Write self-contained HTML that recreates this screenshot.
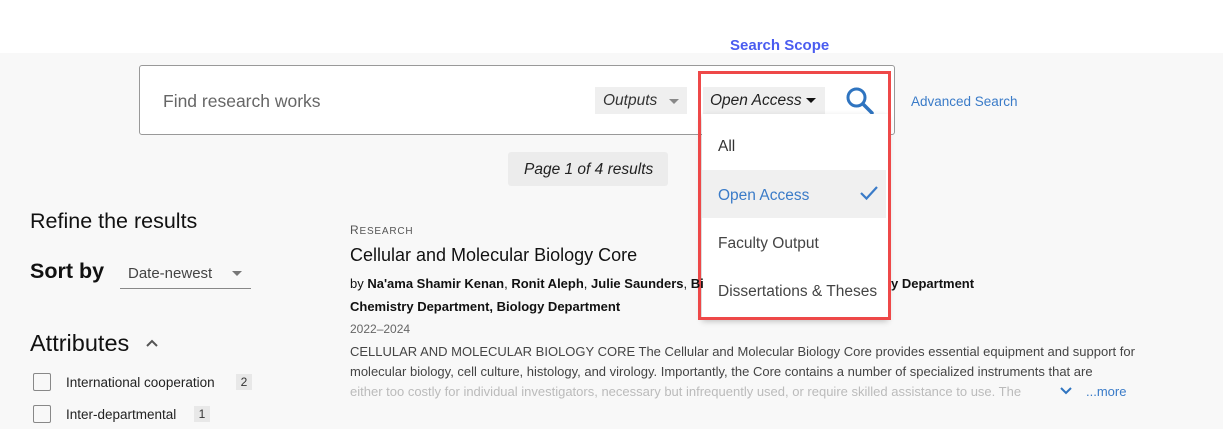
<!DOCTYPE html>
<html><head><style>
*{margin:0;padding:0;box-sizing:border-box}
body{width:1223px;height:429px;overflow:hidden;background:#f8f8f8;font-family:"Liberation Sans",sans-serif;position:relative;color:#111}
.a{position:absolute;white-space:nowrap}
</style></head><body>
<div class="a" style="left:0;top:0;width:1223px;height:53px;background:#fff"></div>
<div class="a" style="left:730px;top:37px;font-size:15px;font-weight:bold;color:#4a5cf0">Search Scope</div>
<div class="a" style="left:139px;top:65px;width:756px;height:70px;background:#fff;border:1px solid #999;border-radius:3px"></div>
<div class="a" style="left:163px;top:91px;font-size:17.5px;color:#666">Find research works</div>
<div class="a" style="left:595px;top:87px;width:92px;height:27px;background:#efefef"></div>
<div class="a" style="left:603px;top:92px;font-size:15.5px;font-style:italic;color:#333">Outputs</div>
<div class="a" style="left:669px;top:99px;border-left:5px solid transparent;border-right:5px solid transparent;border-top:5px solid #888"></div>
<div class="a" style="left:703px;top:87px;width:122px;height:27px;background:#efefef"></div>
<div class="a" style="left:710px;top:92px;font-size:15.5px;font-style:italic;color:#222">Open Access</div>
<div class="a" style="left:806px;top:98px;border-left:5px solid transparent;border-right:5px solid transparent;border-top:5px solid #111"></div>
<svg class="a" style="left:844px;top:85px" width="32" height="32" viewBox="0 0 32 32"><circle cx="12.5" cy="12.5" r="8.5" fill="none" stroke="#2f74c0" stroke-width="3"/><path d="M19 19 L28 28" stroke="#2f74c0" stroke-width="3.5" stroke-linecap="round"/></svg>
<div class="a" style="left:911px;top:94px;font-size:13.5px;color:#3a7bc8">Advanced Search</div>
<div class="a" style="left:702px;top:114px;width:186px;height:204px;background:#fff;box-shadow:0 3px 6px rgba(0,0,0,.25)"></div>
<div class="a" style="left:702px;top:170px;width:184px;height:48px;background:#f0f0f0"></div>
<div class="a" style="left:718px;top:138px;font-size:15.5px;color:#333">All</div>
<div class="a" style="left:718px;top:187px;font-size:15.5px;color:#3a7bc8">Open Access</div>
<svg class="a" style="left:859px;top:185px" width="20" height="16" viewBox="0 0 20 16"><path d="M2 8 L7.5 13.5 L18 2" fill="none" stroke="#3a7bc8" stroke-width="2.2"/></svg>
<div class="a" style="left:718px;top:235px;font-size:15.5px;color:#444">Faculty Output</div>
<div class="a" style="left:718px;top:283px;font-size:15.5px;color:#444">Dissertations &amp; Theses</div>
<div class="a" style="left:698px;top:71px;width:193px;height:249px;border:3px solid #ee4848"></div>
<div class="a" style="left:508px;top:152px;width:160px;height:34px;background:#ececec;border-radius:3px"></div>
<div class="a" style="left:524px;top:161px;font-size:15.5px;font-style:italic;color:#222">Page 1 of 4 results</div>
<div class="a" style="left:30px;top:209px;font-size:21.5px;color:#111">Refine the results</div>
<div class="a" style="left:30px;top:259px;font-size:21.5px;font-weight:bold;color:#111">Sort by</div>
<div class="a" style="left:128px;top:265px;font-size:15px;color:#444">Date-newest</div>
<div class="a" style="left:232px;top:271px;border-left:5px solid transparent;border-right:5px solid transparent;border-top:5px solid #777"></div>
<div class="a" style="left:120px;top:288px;width:131px;height:1px;background:#888"></div>
<div class="a" style="left:30px;top:330px;font-size:23.5px;color:#111">Attributes</div>
<svg class="a" style="left:145px;top:338px" width="14" height="10"><path d="M2 8 L7 3 L12 8" fill="none" stroke="#555" stroke-width="2"/></svg>
<div class="a" style="left:33px;top:373px;width:18px;height:18px;border:1.5px solid #888;border-radius:2px"></div>
<div class="a" style="left:66px;top:375px;font-size:13.5px;color:#222">International cooperation</div>
<div class="a" style="left:236px;top:374px;width:16px;height:16px;background:#e8e8e8;font-size:12px;text-align:center;line-height:16px;color:#333">2</div>
<div class="a" style="left:33px;top:405px;width:18px;height:18px;border:1.5px solid #888;border-radius:2px"></div>
<div class="a" style="left:66px;top:407px;font-size:13.5px;color:#222">Inter-departmental</div>
<div class="a" style="left:194px;top:406px;width:16px;height:16px;background:#e8e8e8;font-size:12px;text-align:center;line-height:16px;color:#333">1</div>
<div class="a" style="left:350px;top:223px;font-size:12px;letter-spacing:.8px;color:#555">R<span style="font-size:10px">ESEARCH</span></div>
<div class="a" style="left:350px;top:245px;font-size:18px;color:#111">Cellular and Molecular Biology Core</div>
<div class="a" style="left:350px;top:276px;font-size:13px;color:#111">by <b style="font-weight:600">Na'ama Shamir Kenan</b>, <b style="font-weight:600">Ronit Aleph</b>, <b style="font-weight:600">Julie Saunders</b>, <b style="font-weight:600">Bi</b></div>
<div class="a" style="left:891px;top:276px;font-size:13px;font-weight:600;color:#111">y Department</div>
<div class="a" style="left:350px;top:299px;font-size:13px;font-weight:600;color:#111">Chemistry Department, Biology Department</div>
<div class="a" style="left:350px;top:322px;font-size:12px;color:#666">2022–2024</div>
<div class="a" style="left:350px;top:344px;font-size:13px;color:#444">CELLULAR AND MOLECULAR BIOLOGY CORE The Cellular and Molecular Biology Core provides essential equipment and support for</div>
<div class="a" style="left:350px;top:364px;font-size:13px;color:#444">molecular biology, cell culture, histology, and virology. Importantly, the Core contains a number of specialized instruments that are</div>
<div class="a" style="left:350px;top:384px;font-size:13px;color:#bbb">either too costly for individual investigators, necessary but infrequently used, or require skilled assistance to use. The</div>
<svg class="a" style="left:1059px;top:386px" width="14" height="10"><path d="M2 2 L7 7 L12 2" fill="none" stroke="#2f74c0" stroke-width="2"/></svg>
<div class="a" style="left:1086px;top:384px;font-size:13px;color:#3a7bc8">...more</div>
</body></html>
